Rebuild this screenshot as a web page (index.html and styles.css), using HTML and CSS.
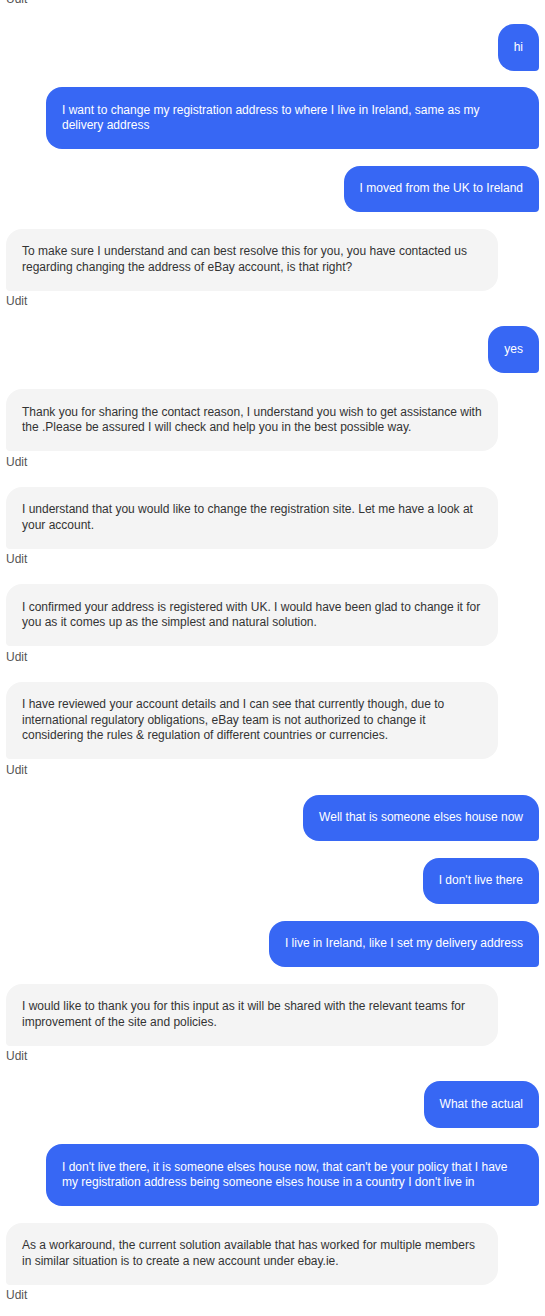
FILE: index.html
```html
<!DOCTYPE html>
<html lang="en">
<head>
<meta charset="utf-8">
<title>Chat</title>
<link rel="stylesheet" href="styles.css">
</head>
<body>
<div class="chat">
  <div class="agent-label first">Udit</div>

  <div class="msg user"><div class="bubble">hi</div></div>
  <div class="msg user"><div class="bubble">I want to change my registration address to where I live in Ireland, same as my delivery address</div></div>
  <div class="msg user"><div class="bubble">I moved from the UK to Ireland</div></div>

  <div class="msg agent"><div class="bubble">To make sure I understand and can best resolve this for you, you have contacted us regarding changing the address of eBay account, is that right?</div><div class="agent-label">Udit</div></div>

  <div class="msg user"><div class="bubble">yes</div></div>

  <div class="msg agent"><div class="bubble">Thank you for sharing the contact reason, I understand you wish to get assistance with the .Please be assured I will check and help you in the best possible way.</div><div class="agent-label">Udit</div></div>

  <div class="msg agent"><div class="bubble">I understand that you would like to change the registration site. Let me have a look at your account.</div><div class="agent-label">Udit</div></div>

  <div class="msg agent"><div class="bubble">I confirmed your address is registered with UK. I would have been glad to change it for you as it comes up as the simplest and natural solution.</div><div class="agent-label">Udit</div></div>

  <div class="msg agent"><div class="bubble">I have reviewed your account details and I can see that currently though, due to international regulatory obligations, eBay team is not authorized to change it considering the rules &amp; regulation of different countries or currencies.</div><div class="agent-label">Udit</div></div>

  <div class="msg user"><div class="bubble">Well that is someone elses house now</div></div>
  <div class="msg user"><div class="bubble">I don't live there</div></div>
  <div class="msg user"><div class="bubble">I live in Ireland, like I set my delivery address</div></div>

  <div class="msg agent"><div class="bubble">I would like to thank you for this input as it will be shared with the relevant teams for improvement of the site and policies.</div><div class="agent-label">Udit</div></div>

  <div class="msg user"><div class="bubble">What the actual</div></div>
  <div class="msg user"><div class="bubble">I don't live there, it is someone elses house now, that can't be your policy that I have my registration address being someone elses house in a country I don't live in</div></div>

  <div class="msg agent"><div class="bubble">As a workaround, the current solution available that has worked for multiple members in similar situation is to create a new account under ebay.ie.</div><div class="agent-label">Udit</div></div>
</div>
</body>
</html>
```
FILE: styles.css
```css
html, body {
  margin: 0;
  padding: 0;
  background: #ffffff;
}
body {
  font-family: "Liberation Sans", Arial, sans-serif;
  font-size: 12px;
  line-height: 15.5px;
  color: #333333;
}
.chat {
  display: flex;
  flex-direction: column;
  gap: 16.5px;
  padding: 0 6px;
}
.msg {
  display: flex;
  flex-direction: column;
}
.msg.user {
  align-items: flex-end;
}
.msg.agent {
  align-items: flex-start;
}
.bubble {
  box-sizing: border-box;
  max-width: 493px;
  padding: 15.5px 16px;
}
.user .bubble {
  background: #3767f4;
  color: #ffffff;
  border-radius: 16px 16px 4px 16px;
}
.agent .bubble {
  background: #f4f4f4;
  color: #333333;
  border-radius: 16px 16px 16px 4px;
  width: 492px;
}
.agent-label {
  margin: 3.5px 0 0.5px;
  color: #555555;
  font-size: 12px;
  line-height: 15px;
}
.agent-label.first {
  margin-top: -8px;
}
```
